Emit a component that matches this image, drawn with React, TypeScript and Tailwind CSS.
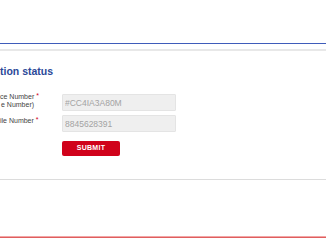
import React from "react";

export default function App() {
    return (
        <div className="w-[326px] h-[245px] bg-white overflow-hidden font-['Liberation_Sans',Arial,sans-serif]">
            <div className="h-[43px]" />
            <div className="h-px bg-[#3f5cba]" />
            <div className="h-[5px]" />
            <div className="h-[2px] bg-[#e8e8e8]" />

            <h2 className="mt-[14px] text-[10.5px] leading-[12px] font-bold text-[#2a4898] whitespace-nowrap">
                tion status
            </h2>

            <div className="mt-[17px] grid grid-cols-[62px_114px] gap-y-[4px]">
                <div className="-mt-[1px] text-[7px] leading-[7.5px] text-[#444] whitespace-nowrap">
                    <div>
                        ce Number <span className="text-[#d0021b] relative -top-[1px]">*</span>
                    </div>
                    <div className="ml-[1px]">e Number)</div>
                </div>
                <input
                    readOnly
                    value="#CC4IA3A80M"
                    className="h-[17px] w-[114px] bg-[#efefef] border border-[#e4e4e4] rounded-[1px] pl-[2px] text-[8.5px] text-[#a3a3a3] outline-none"
                />

                <div className="pt-[2px] text-[7px] leading-[8px] text-[#444] whitespace-nowrap">
                    ile Number <span className="text-[#d0021b] relative -top-[1px]">*</span>
                </div>
                <input
                    readOnly
                    value="8845628391"
                    className="h-[17px] w-[114px] bg-[#efefef] border border-[#e4e4e4] rounded-[1px] pl-[2px] text-[8.5px] text-[#a3a3a3] outline-none"
                />

                <div />
                <button className="mt-[5px] h-[15px] w-[58px] bg-[#d0021b] rounded-[2px] text-white text-[7px] font-bold tracking-[0.3px]">
                    SUBMIT
                </button>
            </div>

            <div className="mt-[23px] h-px bg-[#dcdcdc]" />
            <div className="mt-[56px] h-px bg-[#f2a5a5]" />
            <div className="h-px bg-[#df5e5e]" />
        </div>
    );
}
